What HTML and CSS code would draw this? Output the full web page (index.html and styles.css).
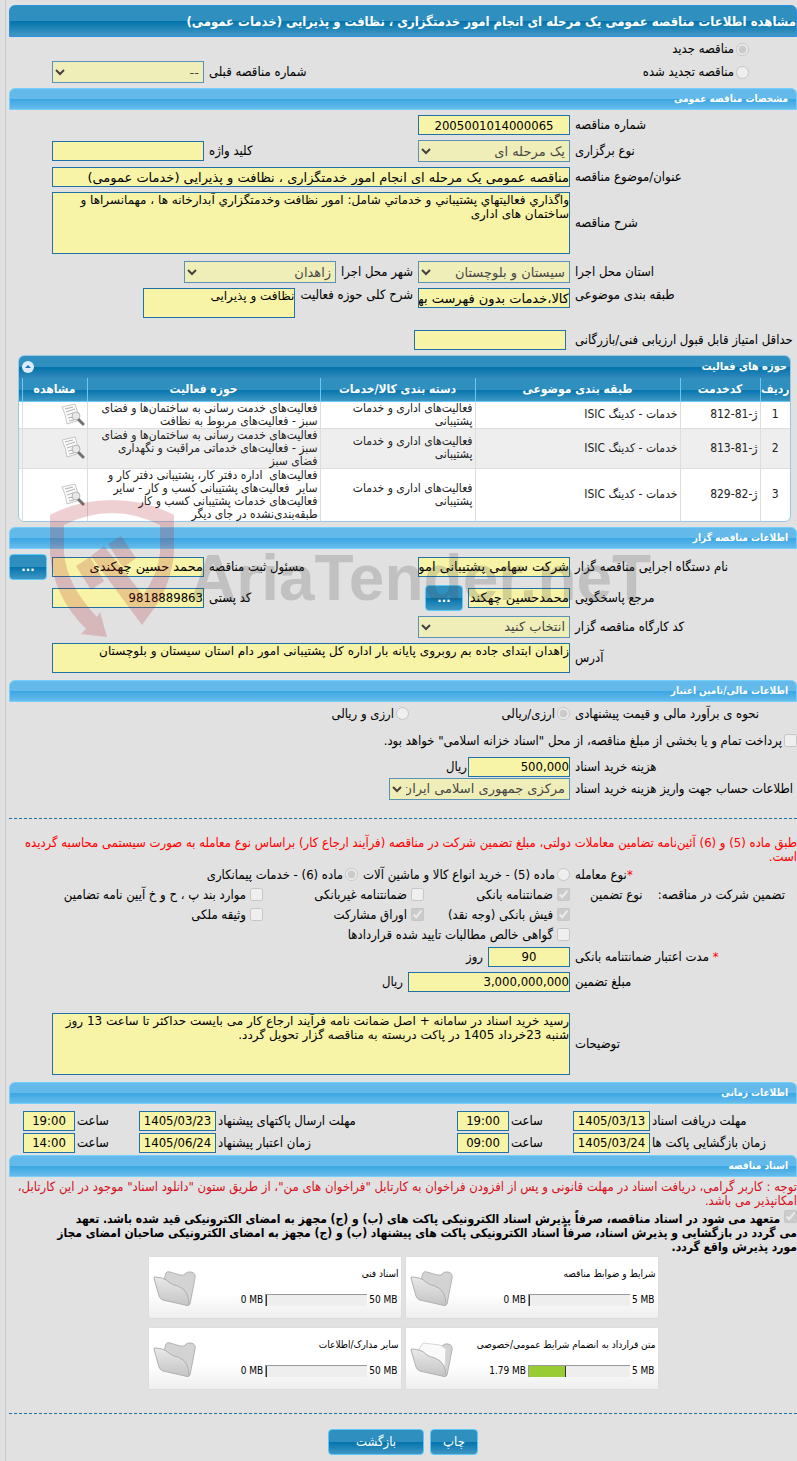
FILE: index.html
```html
<!DOCTYPE html>
<html lang="fa" dir="rtl">
	<head>
		<meta charset="UTF-8">
		<title>مشاهده اطلاعات مناقصه عمومی</title>
		<link rel="stylesheet" href="styles.css">
	</head>
	<body>
		<svg class="symbols" width="0" height="0" aria-hidden="true">
			<defs>
				<linearGradient id="front" x1="0" y1="0" x2="0" y2="1">
					<stop offset="0" stop-color="#e9e9e9"/>
					<stop offset="1" stop-color="#c4c4c4"/>
				</linearGradient>
				<symbol id="folder" viewBox="0 0 44 38">
					<path d="M10 14 L13 3 Q14 1 17 2 L27 5 L31 5 Q34 1 38 2 Q43 3 42 8 L37 34 Q36 36 33 35 Z" fill="#d3d3d3" stroke="#b3b3b3"/>
					<path d="M1 8 Q0 7 3 7 L9 8 Q13 9 17 13 Q20 15 25 16 Q31 18 34 24 Q36 28 36 35 Q35 36 32 35 L10 30 Q7 29 6 26 Z" fill="url(#front)" stroke="#b0b0b0"/>
				</symbol>
				<symbol id="folder-full" viewBox="0 0 44 38">
					<path d="M10 14 L13 4 L32 5 Q35 2 38 3 Q43 4 42 9 L37 34 Q36 36 33 35 Z" fill="#d3d3d3" stroke="#b3b3b3"/>
					<path d="M9 8 L13 2 L30 4 L36 8 L35 26 L12 14 Z" fill="#fafafa" stroke="#d6d6d6"/>
					<path d="M1 9 Q0 8 3 8 L9 9 Q13 10 17 14 Q20 16 25 17 Q31 19 34 25 Q36 29 36 35 Q35 36 32 35 L10 30 Q7 29 6 26 Z" fill="url(#front)" stroke="#b0b0b0"/>
				</symbol>
				<symbol id="view" viewBox="0 0 24 24">
					<path d="M1 4 L14 1 L19 17 L6 21 Q5 12 1 4 Z" fill="#fbfbfb" stroke="#c6c6c6"/>
					<path d="M4 6 L12 4 M5 9 L14 6 M6 12 L12 10 M7 15 L12 14 M8 18 L13 17" stroke="#b0b0b0" fill="none"/>
					<circle cx="15" cy="13" r="4" fill="#e8e8e8" stroke="#b4b4b4"/>
					<path d="M18 17 L22 21" stroke="#707070" stroke-width="3" stroke-linecap="round"/>
				</symbol>
			</defs>
		</svg>

		<div class="page">
			<h1 class="title">مشاهده اطلاعات مناقصه عمومی یک مرحله ای انجام امور خدمتگزاری ، نظافت و پذیرایی (خدمات عمومی)</h1>

			<div class="kinds">
				<div class="row kind">
					<label class="opt"><input type="radio" name="kind" checked disabled>مناقصه جدید</label>
				</div>
				<div class="row kind">
					<label class="opt"><input type="radio" name="kind" disabled>مناقصه تجدید شده</label>
					<label class="label2" for="prevNo">شماره مناقصه قبلی</label>
					<select id="prevNo" disabled><option>--</option></select>
				</div>
			</div>

			<h2 class="bar">مشخصات مناقصه عمومی</h2>
			<div class="group">
				<div class="row">
					<label class="label" for="no">شماره مناقصه</label>
					<input id="no" class="num center" type="text" value="2005001014000065" readonly>
				</div>
				<div class="row">
					<label class="label" for="type">نوع برگزاری</label>
					<select id="type" disabled><option>یک مرحله ای</option></select>
					<label class="label2" for="keyword">کلید واژه</label>
					<input id="keyword" type="text" readonly>
				</div>
				<div class="row">
					<label class="label" for="subject">عنوان/موضوع مناقصه</label>
					<input id="subject" class="wide" type="text" value="مناقصه عمومی یک مرحله ای انجام امور خدمتگزاری ، نظافت و پذیرایی (خدمات عمومی)" readonly>
				</div>
				<div class="row after">
					<label class="label" for="desc">شرح مناقصه</label>
					<textarea id="desc" class="wide tall" readonly>واگذاري فعاليتهاي پشتيباني و خدماتي شامل: امور نظافت وخدمتگزاري آبدارخانه ها ، مهمانسراها و ساختمان های اداری</textarea>
				</div>
				<div class="row">
					<label class="label" for="province">استان محل اجرا</label>
					<select id="province" disabled><option>سیستان و بلوچستان</option></select>
					<label for="city">شهر محل اجرا</label>
					<select id="city" disabled><option>زاهدان</option></select>
				</div>
				<div class="row top">
					<label class="label" for="cat">طبقه بندی موضوعی</label>
					<input id="cat" type="text" value="کالا،خدمات بدون فهرست بها" readonly>
					<label for="field">شرح کلی حوزه فعالیت</label>
					<textarea id="field" readonly>نظافت و پذیرایی</textarea>
				</div>
				<div class="row score">
					<label class="label" for="score">حداقل امتیاز قابل قبول ارزیابی فنی/بازرگانی</label>
					<input id="score" type="text" readonly>
				</div>
			</div>

			<div class="grid">
				<div class="grid-title">
					<span>حوزه های فعالیت</span>
					<button type="button" class="fold" aria-label="بستن">
						<svg width="12" height="12" viewBox="0 0 12 12"><circle cx="6" cy="6" r="6" fill="#dcecf8"/><path d="M3 7 L6 4 L9 7 Z" fill="#1c76ad"/></svg>
					</button>
				</div>
				<table>
					<colgroup>
						<col class="c-row"><col class="c-code"><col class="c-cat"><col class="c-group"><col><col class="c-view"><col class="c-end">
					</colgroup>
					<thead>
						<tr><th>ردیف</th><th>کدخدمت</th><th>طبقه بندی موضوعی</th><th>دسته بندی کالا/خدمات</th><th>حوزه فعالیت</th><th>مشاهده</th><th></th></tr>
					</thead>
					<tbody>
						<tr>
							<td class="index">1</td>
							<td>ژ-81-812</td>
							<td>خدمات - کدینگ ISIC</td>
							<td>فعالیت‌های اداری و خدمات پشتیبانی</td>
							<td>فعالیت‌های خدمت رسانی به ساختمان‌ها و فضای<br>سبز - فعالیت‌های مربوط به نظافت</td>
							<td><svg class="view"><use href="#view"/></svg></td>
							<td></td>
						</tr>
						<tr>
							<td class="index">2</td>
							<td>ژ-81-813</td>
							<td>خدمات - کدینگ ISIC</td>
							<td>فعالیت‌های اداری و خدمات پشتیبانی</td>
							<td>فعالیت‌های خدمت رسانی به ساختمان‌ها و فضای<br>سبز - فعالیت‌های خدماتی مراقبت و نگهداری<br>فضای سبز</td>
							<td><svg class="view"><use href="#view"/></svg></td>
							<td></td>
						</tr>
						<tr>
							<td class="index">3</td>
							<td>ژ-82-829</td>
							<td>خدمات - کدینگ ISIC</td>
							<td>فعالیت‌های اداری و خدمات پشتیبانی</td>
							<td>فعالیت‌های&nbsp; اداره دفتر کار، پشتیبانی دفتر کار و<br>سایر&nbsp; فعالیت‌های پشتیبانی کسب و کار - سایر<br>فعالیت‌های خدمات پشتیبانی کسب و کار<br>طبقه‌بندی‌نشده در جای دیگر</td>
							<td><svg class="view"><use href="#view"/></svg></td>
							<td></td>
						</tr>
					</tbody>
				</table>
			</div>

			<h2 class="bar">اطلاعات مناقصه گزار</h2>
			<div class="group">
				<div class="row edge">
					<label class="label" for="org">نام دستگاه اجرایی مناقصه گزار</label>
					<input id="org" type="text" value="شرکت سهامی پشتیبانی امور دام کشور" readonly>
					<label class="label2" for="reg">مسئول ثبت مناقصه</label>
					<input id="reg" type="text" value="محمد حسین چهکندی" readonly>
					<button type="button" class="btn more">...</button>
				</div>
				<div class="row">
					<label class="label" for="ref">مرجع پاسخگویی</label>
					<input id="ref" class="w102" type="text" value="محمدحسین چهکندی" readonly>
					<button type="button" class="btn more">...</button>
					<label class="label2" for="zip">کد پستی</label>
					<input id="zip" class="num" type="text" value="9818889863" readonly>
				</div>
				<div class="row">
					<label class="label" for="shop">کد کارگاه مناقصه گزار</label>
					<select id="shop" disabled><option>انتخاب کنید</option></select>
				</div>
				<div class="row after">
					<label class="label" for="addr">آدرس</label>
					<textarea id="addr" class="wide" readonly>زاهدان ابتدای جاده بم روبروی پایانه بار اداره کل پشتیبانی امور دام استان سیستان و بلوچستان</textarea>
				</div>
			</div>

			<h2 class="bar">اطلاعات مالی/تامین اعتبار</h2>
			<div class="finance">
				<div class="row line">
					<span class="label">نحوه ی برآورد مالی و قیمت پیشنهادی</span>
					<label class="opt o-cur"><input type="radio" name="cur" checked disabled>ارزی/ریالی</label>
					<label class="opt"><input type="radio" name="cur" disabled>ارزی و ریالی</label>
				</div>
				<div class="row treasury">
					<label class="opt"><input type="checkbox" disabled>پرداخت تمام و یا بخشی از مبلغ مناقصه، از محل "اسناد خزانه اسلامی" خواهد بود.</label>
				</div>
				<div class="row tight">
					<label class="label" for="cost">هزینه خرید اسناد</label>
					<input id="cost" class="num w102" type="text" value="500,000" readonly>
					<span class="unit">ریال</span>
				</div>
				<div class="row tight">
					<label class="label" for="acc">اطلاعات حساب جهت واریز هزینه خرید اسناد</label>
					<select id="acc" class="w181" disabled><option>مرکزی جمهوری اسلامی ایران/</option></select>
				</div>
			</div>

			<hr>

			<p class="note red">طبق ماده (5) و (6) آئین‌نامه تضامین معاملات دولتی، مبلغ تضمین شرکت در مناقصه (فرآیند ارجاع کار) براساس نوع معامله به صورت سیستمی محاسبه گردیده است.</p>
			<div class="row deal">
				<span class="label"><b class="star">*</b>نوع معامله</span>
				<label class="opt"><input type="radio" name="deal" disabled>ماده (5) - خرید انواع کالا و ماشین آلات</label>
				<label class="opt"><input type="radio" name="deal" checked disabled>ماده (6) - خدمات پیمانکاری</label>
			</div>
			<div class="row deal">
				<span class="label pair"><span>تضمین شرکت در مناقصه:</span><span>نوع تضمین</span></span>
				<div class="checks">
					<label class="opt"><input type="checkbox" checked disabled>ضمانتنامه بانکی</label>
					<label class="opt"><input type="checkbox" disabled>ضمانتنامه غیربانکی</label>
					<label class="opt"><input type="checkbox" disabled>موارد بند پ ، ح و خ آیین نامه تضامین</label>
					<label class="opt"><input type="checkbox" checked disabled>فیش بانکی (وجه نقد)</label>
					<label class="opt"><input type="checkbox" checked disabled>اوراق مشارکت</label>
					<label class="opt"><input type="checkbox" disabled>وثیقه ملکی</label>
					<label class="opt full"><input type="checkbox" disabled>گواهی خالص مطالبات تایید شده قراردادها</label>
				</div>
			</div>
			<div class="group bond">
				<div class="row">
					<label class="label" for="days"><b class="star">*</b> مدت اعتبار ضمانتنامه بانکی</label>
					<input id="days" class="num center w82" type="text" value="90" readonly>
					<span>روز</span>
				</div>
				<div class="row">
					<label class="label" for="sum">مبلغ تضمین</label>
					<input id="sum" class="num w162" type="text" value="3,000,000,000" readonly>
					<span>ریال</span>
				</div>
				<div class="row notes">
					<label class="label" for="notes">توضیحات</label>
					<textarea id="notes" class="wide tall" readonly>رسید خرید اسناد در سامانه + اصل ضمانت نامه فرآیند ارجاع کار می بایست حداکثر تا ساعت 13 روز شنبه 23خرداد 1405 در پاکت دربسته به مناقصه گزار تحویل گردد.</textarea>
				</div>
			</div>

			<h2 class="bar">اطلاعات زمانی</h2>
			<div class="times">
				<label for="d1">مهلت دریافت اسناد</label>
				<input id="d1" class="num" type="text" value="1405/03/13" readonly>
				<label for="h1">ساعت</label>
				<input id="h1" class="num" type="text" value="19:00" readonly>
				<label for="d2">مهلت ارسال پاکتهای پیشنهاد</label>
				<input id="d2" class="num" type="text" value="1405/03/23" readonly>
				<label for="h2">ساعت</label>
				<input id="h2" class="num" type="text" value="19:00" readonly>
				<label for="d3">زمان بازگشایی پاکت ها</label>
				<input id="d3" class="num" type="text" value="1405/03/24" readonly>
				<label for="h3">ساعت</label>
				<input id="h3" class="num" type="text" value="09:00" readonly>
				<label for="d4">زمان اعتبار پیشنهاد</label>
				<input id="d4" class="num" type="text" value="1405/06/24" readonly>
				<label for="h4">ساعت</label>
				<input id="h4" class="num" type="text" value="14:00" readonly>
			</div>

			<h2 class="bar">اسناد مناقصه</h2>
			<p class="note crimson">توجه : کاربر گرامی، دریافت اسناد در مهلت قانونی و پس از افزودن فراخوان به کارتابل "فراخوان های من"، از طریق ستون "دانلود اسناد" موجود در این کارتابل، امکانپذیر می باشد.</p>
			<label class="note pledge"><input type="checkbox" checked disabled> متعهد می شود در اسناد مناقصه، صرفاً پذیرش اسناد الکترونیکی پاکت های (ب) و (ج) مجهز به امضای الکترونیکی قید شده باشد. تعهد<br>می گردد در بازگشایی و پذیرش اسناد، صرفاً اسناد الکترونیکی پاکت های پیشنهاد (ب) و (ج) مجهز به امضای الکترونیکی صاحبان امضای مجاز<br>مورد پذیرش واقع گردد.</label>

			<div class="docs">
				<div class="doc">
					<svg class="folder"><use href="#folder"/></svg>
					<div class="doc-body">
						<a href="#" class="doc-name">شرایط و ضوابط مناقصه</a>
						<div class="quota"><span>0 MB</span><div class="meter"><div class="used" style="width:1%"></div></div><span>5 MB</span></div>
					</div>
				</div>
				<div class="doc">
					<svg class="folder"><use href="#folder"/></svg>
					<div class="doc-body">
						<a href="#" class="doc-name">اسناد فنی</a>
						<div class="quota"><span>0 MB</span><div class="meter"><div class="used" style="width:1%"></div></div><span>50 MB</span></div>
					</div>
				</div>
				<div class="doc">
					<svg class="folder"><use href="#folder-full"/></svg>
					<div class="doc-body">
						<a href="#" class="doc-name">متن قرارداد به انضمام شرایط عمومی/خصوصی</a>
						<div class="quota"><span>1.79 MB</span><div class="meter"><div class="used" style="width:37%"></div></div><span>5 MB</span></div>
					</div>
				</div>
				<div class="doc">
					<svg class="folder"><use href="#folder"/></svg>
					<div class="doc-body">
						<a href="#" class="doc-name">سایر مدارک/اطلاعات</a>
						<div class="quota"><span>0 MB</span><div class="meter"><div class="used" style="width:1%"></div></div><span>50 MB</span></div>
					</div>
				</div>
			</div>

			<hr>

			<div class="actions">
				<button type="button" class="btn">چاپ</button>
				<button type="button" class="btn back">بازگشت</button>
			</div>

			<!-- watermark over the form -->
			<div class="mark" dir="ltr" aria-hidden="true">
				<svg width="124" height="138" viewBox="0 0 124 138">
					<path fill="#b41c22" d="M0 15 Q28 0 62 0 Q96 0 124 15 L124 53 Q121 84 105 107 L92 125 L58 79 L41 56 L54 46 L93 95 Q108 74 110 53 L110 25 Q62 1 14 25 L14 53 Q17 86 47 117 L50 112 L57 137 L31 134 L36 129 Q3 96 0 53 Z"/>
					<path fill="#b41c22" d="M26 66 L40 57 L54 81 L41 90 Z M58 44 L71 36 L86 58 L73 68 Z"/>
				</svg>
				<span>AriaTender.neT</span>
			</div>
		</div>
	</body>
</html>
```

FILE: styles.css
```css
*{
	box-sizing: border-box;
}
body{
	margin: 0;
	background-color: #e1e1e1;
	color: #000;
	font: 13px/14px "DejaVu Sans Condensed", "DejaVu Sans", Tahoma, sans-serif;
}
.symbols{
	position: absolute;
}
.page{
	position: relative;
	min-height: 100vh;
	margin-left: 5px;
	padding: 5px 0;
	padding-left: 3px;
	border-left: 1px solid #ccc;
}

/* headings */
.title{
	margin: 0;
	height: 32px;
	line-height: 32px;
	font-size: 13px;
	color: #fff;
	white-space: nowrap;
	border: 1px solid #2f8fe0;
	border-radius: 6px 6px 0 0;
	background: linear-gradient(#2f90bf 50%, #0273ac 50%, #4298c4);
}
.bar{
	margin: 0;
	height: 22px;
	line-height: 20px;
	padding: 0 8px;
	font-size: 10px;
	color: #fff;
	border: 1px solid #74d0f8;
	border-radius: 6px 6px 0 0;
	background: linear-gradient(#63b9ea 50%, #3aa6e2 50%, #66bceb);
}

/* form rows */
.group{
	display: flex;
	flex-direction: column;
	gap: 5px;
	padding: 5px 0;
}
.row{
	display: flex;
	align-items: center;
	gap: 5px;
	padding-left: 43px;
	white-space: nowrap;
}
.row.edge{
	padding-left: 0;
}
.row.top{
	align-items: flex-start;
}
.row.after{
	margin-bottom: 2px;
}
.row.score{
	margin-top: 7px;
	gap: 9px;
}
.kinds{
	padding-bottom: 5px;
}
.kind{
	min-height: 24px;
	padding-right: 48px;
}
.kind + .kind{
	min-height: 22px;
}
.label{
	flex: none;
	width: 222px;
	text-align: left;
}
.label2{
	flex: 1;
	text-align: left;
}
input[type="text"],select,textarea{
	width: 152px;
	height: 20px;
	margin: 0;
	padding: 0;
	font-family: "DejaVu Sans", Tahoma, sans-serif;
	font-size: 13px;
	color: #000;
	background-color: #f7f4a7;
	border: 1px solid #1f72a8;
	border-radius: 0;
	outline: 0;
}
input[type="text"].num{
	font-family: "DejaVu Sans Condensed", "DejaVu Sans", Tahoma, sans-serif;
}
select{
	height: 22px;
}
textarea{
	height: 30px;
	font-size: 12px;
	line-height: 14px;
	resize: none;
	overflow: hidden;
}
textarea.tall{
	height: 62px;
}
.row .wide{
	flex: 1;
}
input.center{
	text-align: center;
}
input.w82{ width: 82px; }
input.w102{ width: 102px; }
input.w162{ width: 162px; }
select.w181{ width: 181px; }
.opt{
	display: flex;
	align-items: center;
	gap: 2px;
	white-space: nowrap;
}
.opt input,.pledge input{
	flex: none;
	width: 13px;
	height: 13px;
	margin: 0;
}

/* buttons */
.btn{
	height: 26px;
	padding: 0 12px;
	font-family: inherit;
	font-size: 13px;
	color: #fff;
	border: 1px solid #5cc8f6;
	border-radius: 4px;
	background: linear-gradient(#2f90bf 50%, #0273ac 50%, #3f97c3);
}
.more{
	flex: none;
	width: 38px;
	padding: 0;
	font-weight: bold;
}

/* activity table */
.grid{
	margin: 0 6px 5px 9px;
	border: 1px solid #9cc8e2;
	border-radius: 6px;
	background-color: #fff;
	overflow: hidden;
}
.grid-title{
	display: flex;
	justify-content: space-between;
	align-items: center;
	height: 22px;
	padding: 0 3px;
	font-weight: bold;
	font-size: 11px;
	color: #fff;
	background: linear-gradient(#2f90bf 50%, #0273ac 50%, #3188bb);
}
.fold{
	width: 12px;
	height: 12px;
	padding: 0;
	border: 0;
	background: none;
}
.fold svg{
	display: block;
}
table{
	width: 100%;
	table-layout: fixed;
	border-collapse: collapse;
	font-size: 12px;
	line-height: 13px;
}
.c-row{ width: 30px; }
.c-code{ width: 80px; }
.c-cat{ width: 205px; }
.c-group{ width: 155px; }
.c-view{ width: 65px; }
.c-end{ width: 3px; }
thead tr{
	background: linear-gradient(#2f90bf 50%, #0273ac 50%, #3f97c3);
}
th{
	height: 23px;
	padding: 0;
	color: #fff;
	white-space: nowrap;
	overflow: hidden;
	border-left: 1px solid #6cc8f2;
	border-bottom: 1px solid #6cc8f2;
}
td{
	height: 27px;
	padding: 0 2px;
	color: #222;
	border-left: 1px solid #ddd;
	border-bottom: 1px solid #ddd;
}
th:last-child,td:last-child{
	padding: 0;
	border-left: 0;
}
tbody tr:nth-child(even){
	background-color: #eee;
}
tbody tr:last-child td{
	border-bottom: 0;
}
.index{
	text-align: center;
}
.view{
	display: block;
	width: 24px;
	height: 24px;
}

/* finance */
.finance{
	padding-bottom: 18px;
}
.line{
	height: 24px;
}
.treasury{
	height: 30px;
}
.o-cur{
	width: 156px;
}
.tight{
	min-height: 22px;
}
.unit{
	margin-right: -4px;
}
hr{
	margin: 0;
	border: 0;
	border-top: 1px dashed #1f72a8;
}
.note{
	display: block;
	margin: 0;
	line-height: 14px;
}
.red{
	padding: 17px 0 1px;
	color: #f00;
}
.crimson{
	padding-top: 3px;
	color: #d8101c;
}
.star{
	color: #f00;
	font-weight: normal;
}
.deal{
	align-items: flex-start;
	line-height: 20px;
	padding-left: 0;
}
.pair{
	display: flex;
	justify-content: space-between;
	padding: 0 12px 0 15px;
}
.checks{
	display: grid;
	grid-template-columns: 146px 161px auto;
}
.checks .full{
	grid-column: 1 / 4;
}
.checks .opt{
	gap: 4px;
}
.bond{
	padding: 2px 0 7px;
}
.notes{
	margin-top: 16px;
}

/* dates */
.times{
	display: grid;
	grid-template-columns: 145px 77px 60px 52px 1fr 77px 60px 52px;
	gap: 2px;
	align-items: center;
	padding: 7px 0 2px 14px;
}
.times label{
	text-align: left;
	white-space: nowrap;
}
.times input[type="text"]{
	width: 100%;
	text-align: center;
}

.pledge{
	padding: 2px 0 2px;
	font-size: 12px;
	font-weight: bold;
}

/* documents */
.docs{
	display: grid;
	grid-template-columns: 254px 254px;
	justify-content: center;
	gap: 8px 3px;
	margin-bottom: 23px;
}
.doc{
	display: flex;
	direction: ltr;
	height: 63px;
	padding: 0 2px 0 4px;
	font-size: 10px;
	border: 1px solid #ddd;
	background: linear-gradient(#fff 60%, #eee);
}
.folder{
	flex: none;
	width: 44px;
	height: 38px;
	margin-top: 13px;
}
.doc-body{
	flex: 1;
	display: flex;
	flex-direction: column;
	align-items: flex-end;
	gap: 12px;
	padding-top: 10px;
}
.doc-name{
	direction: rtl;
	color: #000;
	text-decoration: none;
	white-space: nowrap;
}
.quota{
	display: flex;
	align-items: center;
	gap: 2px;
	padding-right: 1px;
}
.meter{
	width: 102px;
	height: 12px;
	border-top: 1px solid #999;
	border-left: 1px solid #999;
	background-color: #eee;
}
.used{
	height: 11px;
	background-color: #9c3;
	border-right: 1px solid #333;
}

.actions{
	display: flex;
	justify-content: center;
	gap: 6px;
	padding-top: 15px;
}
.back{
	width: 96px;
}

.mark{
	position: absolute;
	top: 500px;
	left: 44px;
	display: flex;
	align-items: center;
	gap: 16px;
	pointer-events: none;
	opacity: .2;
}
.mark span{
	padding-top: 18px;
	font: bold 64px/64px "Liberation Sans Narrow", "Liberation Sans", sans-serif;
	color: #444;
}
```
